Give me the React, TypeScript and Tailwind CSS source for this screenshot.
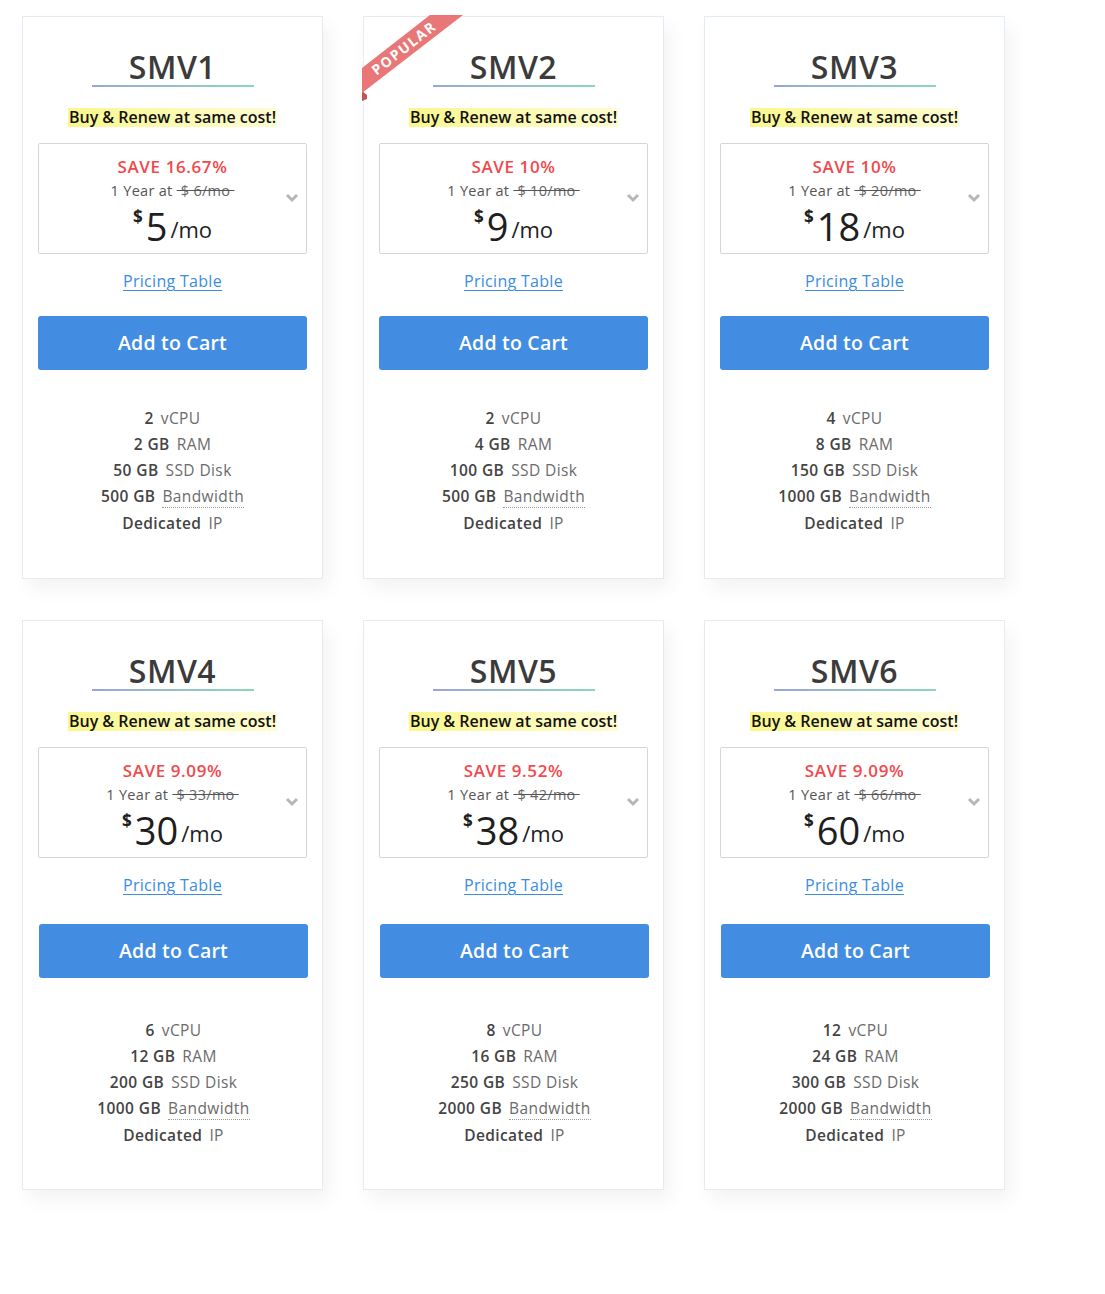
import React from "react";

type Plan = {
  name: string;
  save: string;
  old: string;
  price: string;
  cpu: string;
  ram: string;
  disk: string;
  bw: string;
  popular?: boolean;
};

const plans: Plan[] = [
  { name: "SMV1", save: "SAVE 16.67%", old: "6", price: "5", cpu: "2", ram: "2 GB", disk: "50 GB", bw: "500 GB" },
  { name: "SMV2", save: "SAVE 10%", old: "10", price: "9", cpu: "2", ram: "4 GB", disk: "100 GB", bw: "500 GB", popular: true },
  { name: "SMV3", save: "SAVE 10%", old: "20", price: "18", cpu: "4", ram: "8 GB", disk: "150 GB", bw: "1000 GB" },
  { name: "SMV4", save: "SAVE 9.09%", old: "33", price: "30", cpu: "6", ram: "12 GB", disk: "200 GB", bw: "1000 GB" },
  { name: "SMV5", save: "SAVE 9.52%", old: "42", price: "38", cpu: "8", ram: "16 GB", disk: "250 GB", bw: "2000 GB" },
  { name: "SMV6", save: "SAVE 9.09%", old: "66", price: "60", cpu: "12", ram: "24 GB", disk: "300 GB", bw: "2000 GB" },
];

function Ribbon() {
  return (
    <svg
      className="absolute left-[-2px] top-[-2px] pointer-events-none"
      width="104"
      height="90"
      viewBox="0 0 104 90"
    >
      <polygon points="0,76 5,80 5,84 0,86" fill="#c25555" />
      <polygon points="0,53 68,0 101,0 0,78" fill="#e97777" />
      <text
        x="0"
        y="0"
        fill="#ffffff"
        fontSize="14"
        fontWeight="700"
        letterSpacing="1.6"
        textAnchor="middle"
        transform="translate(45 37) rotate(-38)"
        style={{ fontFamily: "'Open Sans', 'Liberation Sans', sans-serif" }}
      >
        POPULAR
      </text>
    </svg>
  );
}

function Feature({ b, n, dotted }: { b: string; n: string; dotted?: boolean }) {
  return (
    <div className="h-[26px] leading-[26px] text-[15.5px] tracking-[0.4px]">
      <span className="font-semibold text-[#444]">{b}</span>
      <span className="ml-[7px] text-[#6b6b6b]">
        <span className={dotted ? "border-b border-dotted border-[#999]" : ""}>{n}</span>
      </span>
    </div>
  );
}

function Card({ p, second }: { p: Plan; second?: boolean }) {
  return (
    <div
      className={`relative bg-white border border-[#e4ebf3] shadow-[6px_10px_18px_rgba(0,0,0,0.05)] px-[15px] pt-[32px] ${
        second ? "h-[570px]" : "h-[563px]"
      }`}
    >
      {p.popular && <Ribbon />}
      <div className="text-center text-[32px] leading-[36px] font-semibold text-[#3b3b3b] tracking-[0.5px]">{p.name}</div>
      <div className="mx-auto h-[2px] w-[162px] bg-gradient-to-r from-[#9ba4d9] to-[#8cd8b4]" />
      <div className="mt-[21px] text-center text-[16px] leading-[19px]">
        <span className="inline-block align-top px-[1px] text-[16px] leading-[19px] font-semibold text-[#111] bg-gradient-to-r from-[#faf78c] to-[#fefcd2]">
          Buy &amp; Renew at same cost!
        </span>
      </div>
      <div className="relative mt-[16px] h-[111px] border border-[#d6d6d6] rounded-[2px] pt-[12px] text-center">
        <div className="text-[17px] leading-[22px] font-semibold text-[#f2494c] tracking-[0.6px]">{p.save}</div>
        <div className="mt-[3px] text-[14.5px] leading-[20px] text-[#555] tracking-[0.3px]">
          1 Year at{" "}
          <s className="text-[#666] decoration-[#555]">{"\u00a0$\u00a0" + p.old + "/mo\u00a0"}</s>
        </div>
        <div className="mt-[3px] flex items-start justify-center leading-none text-[#1e1e1e]">
          <span className="mt-[4px] mr-[3px] text-[17px] font-bold">$</span>
          <span className="text-[38px] leading-[44px]">{p.price}</span>
          <span className="ml-[3px] mt-[14px] text-[22px]">/mo</span>
        </div>
        <svg className="absolute right-[7px] top-[49px]" width="14" height="10" viewBox="0 0 14 10">
          <polyline points="2,2 7,7 12,2" fill="none" stroke="#b7b7b7" strokeWidth="3" />
        </svg>
      </div>
      <div className="mt-[18px] text-center text-[16px] leading-[18px] tracking-[0.3px]">
        <a href="#" className="text-[#3b8ce2] underline underline-offset-[3px]">
          Pricing Table
        </a>
      </div>
      <button
        className={`${second ? "mt-[30px] translate-x-[1px]" : "mt-[26px]"} block w-full h-[54px] rounded-[3px] bg-[#428de2] text-white text-[19.5px] font-semibold tracking-[0.2px]`}
      >
        Add to Cart
      </button>
      <div className={`${second ? "mt-[39px] translate-x-[1px]" : "mt-[35px]"} text-center`}>
        <Feature b={p.cpu} n="vCPU" />
        <Feature b={p.ram} n="RAM" />
        <Feature b={p.disk} n="SSD Disk" />
        <Feature b={p.bw} n="Bandwidth" dotted />
        <div className="mt-[1px]">
          <Feature b="Dedicated" n="IP" />
        </div>
      </div>
    </div>
  );
}

export default function App() {
  return (
    <div
      className="min-h-[1294px] w-[1105px] bg-white pl-[22px] pt-[16px]"
      style={{ fontFamily: "'Open Sans', 'Liberation Sans', sans-serif" }}
    >
      <div className="grid grid-cols-[301px_301px_301px] gap-x-[40px] gap-y-[41px]">
        {plans.map((p, i) => (
          <Card key={p.name} p={p} second={i >= 3} />
        ))}
      </div>
    </div>
  );
}
